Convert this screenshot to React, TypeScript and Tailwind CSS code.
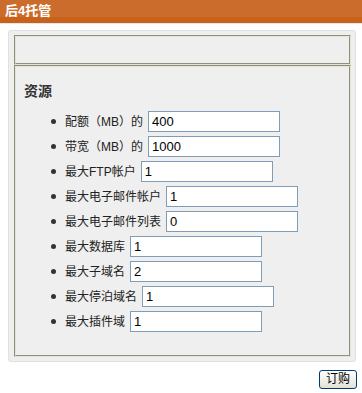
import React from 'react';

const rows: { label: string; value: string }[] = [
  { label: '配额（MB）的', value: '400' },
  { label: '带宽（MB）的', value: '1000' },
  { label: '最大FTP帐户', value: '1' },
  { label: '最大电子邮件帐户', value: '1' },
  { label: '最大电子邮件列表', value: '0' },
  { label: '最大数据库', value: '1' },
  { label: '最大子域名', value: '2' },
  { label: '最大停泊域名', value: '1' },
  { label: '最大插件域', value: '1' },
];

// XP style groove frame: dark outer top/left, light outer bottom/right
function Groove({ className = '', children }: { className?: string; children?: React.ReactNode }) {
  return (
    <div className={`border-t border-l border-r border-b border-t-[#8f8f7f] border-l-[#8f8f7f] border-r-[#e6e3d0] border-b-[#e6e3d0] ${className}`}>
      <div className="h-full border-t border-l border-r border-b border-t-[#e6e3d0] border-l-[#e6e3d0] border-r-[#8f8f7f] border-b-[#8f8f7f]">
        {children}
      </div>
    </div>
  );
}

export default function App() {
  return (
    <div
      className="w-[362px] h-[393px] bg-white text-[#222]"
      style={{ fontFamily: '"Liberation Sans", "Noto Sans CJK SC", sans-serif' }}
    >
      {/* Header */}
      <div className="h-[23px] bg-[#cc6c2c] border-b-[6px] border-[#c8621a] pl-[5px] text-[13px] font-bold text-white leading-[21px]">
        后4托管
      </div>
      <div className="h-px bg-[#e6e6e6]" />

      {/* Panel */}
      <div className="ml-[8px] mr-[6px] mt-[6px] h-[332px] rounded-[3px] border border-[#e0e0e0] bg-[#efefef] pl-[5px] pr-[4px] pt-[4px]">
        <Groove className="h-[30px]" />
        <Groove className="h-[292px]">
          <div className="pt-[15px]">
            <div className="pl-[8px] h-[18px] leading-[18px] text-[14px] font-bold text-[#333]">资源</div>
            <ul className="mt-[9px]">
              {rows.map((r) => (
                <li key={r.label} className="flex h-[25px] items-center pl-[35px]">
                  <span className="h-[5px] w-[5px] rounded-full bg-[#333]" />
                  <span className="ml-[9px] text-[12px] leading-[16px] whitespace-nowrap">{r.label}</span>
                  <input
                    readOnly
                    value={r.value}
                    className="ml-[5px] h-[21px] w-[132px] border border-[#7f9db9] bg-white px-[3px] text-[13px] text-black outline-none"
                    style={{ fontFamily: '"Liberation Sans", sans-serif' }}
                  />
                </li>
              ))}
            </ul>
          </div>
        </Groove>
      </div>

      {/* Footer button */}
      <div className="mt-[8px] flex justify-end pr-[5px]">
        <button className="h-[19px] w-[38px] rounded-[3px] border border-[#003c74] bg-gradient-to-b from-white to-[#e3e1d6] text-[12px] leading-[17px] text-black">
          订购
        </button>
      </div>
    </div>
  );
}
